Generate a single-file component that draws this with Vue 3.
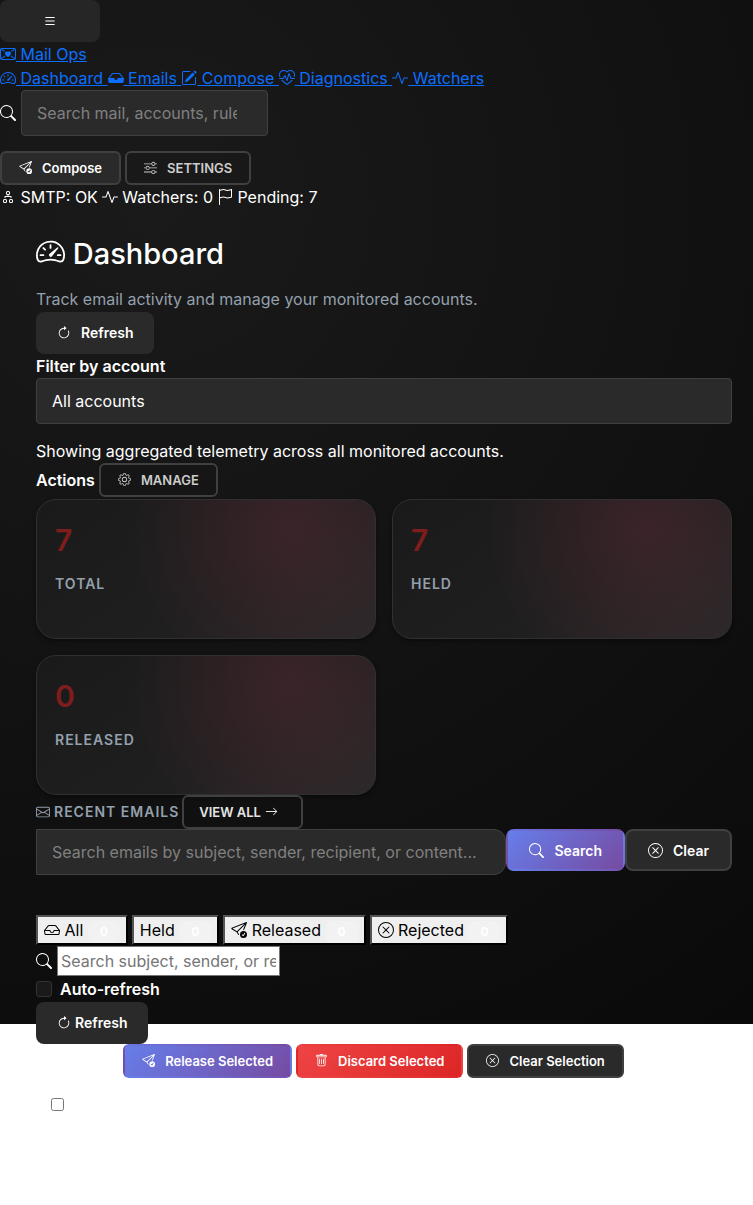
<script setup>
import { h, ref } from 'vue'

const icons = {
  list: ['M2.5 12a.5.5 0 0 1 .5-.5h10a.5.5 0 0 1 0 1H3a.5.5 0 0 1-.5-.5m0-4a.5.5 0 0 1 .5-.5h10a.5.5 0 0 1 0 1H3a.5.5 0 0 1-.5-.5m0-4a.5.5 0 0 1 .5-.5h10a.5.5 0 0 1 0 1H3a.5.5 0 0 1-.5-.5'],
  mailHeart: [
    'M2 2a2 2 0 0 0-2 2v8a2 2 0 0 0 2 2h12a2 2 0 0 0 2-2V4a2 2 0 0 0-2-2zM1 4a1 1 0 0 1 1-1h12a1 1 0 0 1 1 1v8a1 1 0 0 1-1 1H2a1 1 0 0 1-1-1z',
    'M8 5.993c1.664-1.711 5.825 1.283 0 5.132-5.825-3.85-1.664-6.843 0-5.132',
    'M.8 3.6 1.4 2.8 5 5 4.4 5.8zM15.2 3.6 14.6 2.8 11 5l.6.8zM.8 12.2l.6.8 4-2.7-.6-.8zM15.2 12.2l-.6.8-4-2.7.6-.8z'
  ],
  speedometer: [
    'M8 4a.5.5 0 0 1 .5.5V6a.5.5 0 0 1-1 0V4.5A.5.5 0 0 1 8 4M3.732 5.732a.5.5 0 0 1 .707 0l.915.914a.5.5 0 1 1-.708.708l-.914-.915a.5.5 0 0 1 0-.707M2 10a.5.5 0 0 1 .5-.5h1.586a.5.5 0 0 1 0 1H2.5A.5.5 0 0 1 2 10m9.5 0a.5.5 0 0 1 .5-.5h1.5a.5.5 0 0 1 0 1H12a.5.5 0 0 1-.5-.5m.754-4.246a.39.39 0 0 0-.527-.02L7.547 9.31a.91.91 0 1 0 1.302 1.258l3.434-4.297a.39.39 0 0 0-.029-.518z',
    'M0 10a8 8 0 1 1 15.547 2.661c-.442 1.253-1.845 1.602-2.932 1.25C11.309 13.488 9.475 13 8 13c-1.474 0-3.31.488-4.615.911-1.087.352-2.49.003-2.932-1.25A8 8 0 0 1 0 10m8-7a7 7 0 0 0-6.603 9.329c.203.575.923.876 1.68.63C4.397 12.533 6.358 12 8 12s3.604.532 4.923.96c.757.245 1.477-.056 1.68-.631A7 7 0 0 0 8 3'
  ],
  inboxFill: ['M4.98 4a.5.5 0 0 0-.39.188L1.54 8H6a.5.5 0 0 1 .5.5 1.5 1.5 0 1 0 3 0A.5.5 0 0 1 10 8h4.46l-3.05-3.812A.5.5 0 0 0 11.02 4zm-1.17-.437A1.5 1.5 0 0 1 4.98 3h6.04a1.5 1.5 0 0 1 1.17.563l3.7 4.625a.5.5 0 0 1 .106.374l-.39 3.124A1.5 1.5 0 0 1 14.117 13H1.883a1.5 1.5 0 0 1-1.489-1.314l-.39-3.124a.5.5 0 0 1 .106-.374z'],
  inbox: ['M4.98 4a.5.5 0 0 0-.39.188L1.54 8H6a.5.5 0 0 1 .5.5 1.5 1.5 0 1 0 3 0A.5.5 0 0 1 10 8h4.46l-3.05-3.812A.5.5 0 0 0 11.02 4zm9.954 5H10.45a2.5 2.5 0 0 1-4.9 0H1.066l.32 2.562a.5.5 0 0 0 .497.438h12.234a.5.5 0 0 0 .496-.438zM3.809 3.563A1.5 1.5 0 0 1 4.981 3h6.038a1.5 1.5 0 0 1 1.172.563l3.7 4.625a.5.5 0 0 1 .105.374l-.39 3.124A1.5 1.5 0 0 1 14.117 13H1.883a1.5 1.5 0 0 1-1.489-1.314l-.39-3.124a.5.5 0 0 1 .106-.374z'],
  pencil: [
    'M15.502 1.94a.5.5 0 0 1 0 .706L14.459 3.69l-2-2L13.502.646a.5.5 0 0 1 .707 0l1.293 1.293zm-1.75 2.456-2-2L4.939 9.21a.5.5 0 0 0-.121.196l-.805 2.414a.25.25 0 0 0 .316.316l2.414-.805a.5.5 0 0 0 .196-.12l6.813-6.814z',
    'M1 13.5A1.5 1.5 0 0 0 2.5 15h11a1.5 1.5 0 0 0 1.5-1.5v-6a.5.5 0 0 0-1 0v6a.5.5 0 0 1-.5.5h-11a.5.5 0 0 1-.5-.5v-11a.5.5 0 0 1 .5-.5H9a.5.5 0 0 0 0-1H2.5A1.5 1.5 0 0 0 1 2.5z'
  ],
  heartPulse: [
    'm8 2.748-.717-.737C5.6.281 2.514.878 1.4 3.053.918 3.995.78 5.323 1.508 7H.43c-2.128-5.697 4.165-8.83 7.394-5.857q.09.083.176.171a3 3 0 0 1 .176-.17c3.23-2.974 9.522.159 7.394 5.856h-1.078c.728-1.677.59-3.005.108-3.947C13.486.878 10.4.28 8.717 2.01zM2.212 10h1.315C4.593 11.183 6.05 12.458 8 13.795c1.949-1.337 3.407-2.612 4.473-3.795h1.315c-1.265 1.566-3.14 3.25-5.788 5-2.648-1.75-4.523-3.434-5.788-5',
    'M10.464 3.314a.5.5 0 0 0-.945.049L7.921 8.956 6.464 5.314a.5.5 0 0 0-.88-.091L3.732 8H.5a.5.5 0 0 0 0 1H4a.5.5 0 0 0 .416-.223l1.473-2.209 1.647 4.118a.5.5 0 0 0 .945-.049l1.598-5.593 1.457 3.642A.5.5 0 0 0 12 9h3.5a.5.5 0 0 0 0-1h-3.162z'
  ],
  activity: ['M6 2a.5.5 0 0 1 .47.33L10 12.036l1.53-4.208A.5.5 0 0 1 12 7.5h3.5a.5.5 0 0 1 0 1h-3.15l-1.88 5.17a.5.5 0 0 1-.94 0L6 3.964 4.47 8.171A.5.5 0 0 1 4 8.5H.5a.5.5 0 0 1 0-1h3.15l1.88-5.17A.5.5 0 0 1 6 2'],
  search: ['M11.742 10.344a6.5 6.5 0 1 0-1.397 1.398h-.001q.044.06.098.115l3.85 3.85a1 1 0 0 0 1.415-1.414l-3.85-3.85a1 1 0 0 0-.115-.1zM12 6.5a5.5 5.5 0 1 1-11 0 5.5 5.5 0 0 1 11 0'],
  sendCheck: [
    'M15.964.686a.5.5 0 0 0-.65-.65L.767 5.855a.75.75 0 0 0-.124 1.329l4.995 3.178 1.531 2.406a.5.5 0 0 0 .844-.536L6.637 10.07l7.494-7.494-1.895 4.738a.5.5 0 1 0 .928.372zm-2.54 1.183L5.93 9.363 1.591 6.602z',
    'M16 12.5a3.5 3.5 0 1 1-7 0 3.5 3.5 0 0 1 7 0m-1.993-1.679a.5.5 0 0 0-.686.172l-1.17 1.95-.547-.547a.5.5 0 0 0-.708.708l.774.773a.75.75 0 0 0 1.174-.144l1.335-2.226a.5.5 0 0 0-.172-.686'
  ],
  sliders: ['M11.5 2a1.5 1.5 0 1 0 0 3 1.5 1.5 0 0 0 0-3M9.05 3a2.5 2.5 0 0 1 4.9 0H16v1h-2.05a2.5 2.5 0 0 1-4.9 0H0V3zM4.5 7a1.5 1.5 0 1 0 0 3 1.5 1.5 0 0 0 0-3M2.05 8a2.5 2.5 0 0 1 4.9 0H16v1H6.95a2.5 2.5 0 0 1-4.9 0H0V8zm9.45 4a1.5 1.5 0 1 0 0 3 1.5 1.5 0 0 0 0-3m-2.45 1a2.5 2.5 0 0 1 4.9 0H16v1h-2.05a2.5 2.5 0 0 1-4.9 0H0v-1z'],
  diagram: ['M6 3.5A1.5 1.5 0 0 1 7.5 2h1A1.5 1.5 0 0 1 10 3.5v1A1.5 1.5 0 0 1 8.5 6v1H11a.5.5 0 0 1 .5.5v1a.5.5 0 0 1-1 0V8h-5v.5a.5.5 0 0 1-1 0v-1A.5.5 0 0 1 5 7h2.5V6A1.5 1.5 0 0 1 6 4.5zM8.5 5a.5.5 0 0 0 .5-.5v-1a.5.5 0 0 0-.5-.5h-1a.5.5 0 0 0-.5.5v1a.5.5 0 0 0 .5.5zM3 11.5A1.5 1.5 0 0 1 4.5 10h1A1.5 1.5 0 0 1 7 11.5v1A1.5 1.5 0 0 1 5.5 14h-1A1.5 1.5 0 0 1 3 12.5zm1.5-.5a.5.5 0 0 0-.5.5v1a.5.5 0 0 0 .5.5h1a.5.5 0 0 0 .5-.5v-1a.5.5 0 0 0-.5-.5zm4.5.5a1.5 1.5 0 0 1 1.5-1.5h1a1.5 1.5 0 0 1 1.5 1.5v1a1.5 1.5 0 0 1-1.5 1.5h-1A1.5 1.5 0 0 1 9 12.5zm1.5-.5a.5.5 0 0 0-.5.5v1a.5.5 0 0 0 .5.5h1a.5.5 0 0 0 .5-.5v-1a.5.5 0 0 0-.5-.5z'],
  flag: ['M14.778.085A.5.5 0 0 1 15 .5V8a.5.5 0 0 1-.314.464l-.032.013a12 12 0 0 1-.397.15c-.264.095-.631.223-1.047.35-.816.252-1.879.523-2.71.523-.847 0-1.548-.28-2.158-.525l-.028-.01C7.68 8.71 7.14 8.5 6.5 8.5c-.7 0-1.638.23-2.437.477A20 20 0 0 0 3 9.342V15.5a.5.5 0 0 1-1 0V.5a.5.5 0 0 1 1 0v.282c.226-.079.496-.17.79-.26C4.606.272 5.67 0 6.5 0c.84 0 1.524.277 2.121.519l.043.018C9.286.788 9.828 1 10.5 1c.7 0 1.638-.23 2.437-.477a20 20 0 0 0 1.349-.476zM14 1.221c-.22.078-.48.167-.766.255-.81.252-1.872.523-2.734.523-.886 0-1.592-.286-2.203-.534l-.008-.003C7.662 1.21 7.139 1 6.5 1c-.669 0-1.606.229-2.415.478A21 21 0 0 0 3 1.845v6.433c.22-.078.48-.167.766-.255C4.576 7.77 5.638 7.5 6.5 7.5c.847 0 1.548.28 2.158.525l.028.01C9.32 8.29 9.86 8.5 10.5 8.5c.668 0 1.606-.229 2.415-.478A21 21 0 0 0 14 7.655z'],
  refresh: [
    'M8 3a5 5 0 1 0 4.546 2.914.5.5 0 0 1 .908-.417A6 6 0 1 1 8 2z',
    'M8 4.466V.534a.25.25 0 0 1 .41-.192l2.36 1.966c.12.1.12.284 0 .384L8.41 4.658A.25.25 0 0 1 8 4.466'
  ],
  gear: [
    'M8 4.754a3.246 3.246 0 1 0 0 6.492 3.246 3.246 0 0 0 0-6.492M5.754 8a2.246 2.246 0 1 1 4.492 0 2.246 2.246 0 0 1-4.492 0',
    'M9.796 1.343c-.527-1.79-3.065-1.79-3.592 0l-.094.319a.873.873 0 0 1-1.255.52l-.292-.16c-1.64-.892-3.433.902-2.54 2.541l.159.292a.873.873 0 0 1-.52 1.255l-.319.094c-1.79.527-1.79 3.065 0 3.592l.319.094a.873.873 0 0 1 .52 1.255l-.16.292c-.892 1.64.901 3.434 2.541 2.54l.292-.159a.873.873 0 0 1 1.255.52l.094.319c.527 1.79 3.065 1.79 3.592 0l.094-.319a.873.873 0 0 1 1.255-.52l.292.16c1.64.893 3.434-.902 2.54-2.541l-.159-.292a.873.873 0 0 1 .52-1.255l.319-.094c1.79-.527 1.79-3.065 0-3.592l-.319-.094a.873.873 0 0 1-.52-1.255l.16-.292c.893-1.64-.902-3.433-2.541-2.54l-.292.159a.873.873 0 0 1-1.255-.52zm-2.633.283c.246-.835 1.428-.835 1.674 0l.094.319a1.873 1.873 0 0 0 2.693 1.115l.291-.16c.764-.415 1.6.42 1.184 1.185l-.159.292a1.873 1.873 0 0 0 1.116 2.692l.318.094c.835.246.835 1.428 0 1.674l-.319.094a1.873 1.873 0 0 0-1.115 2.693l.16.291c.415.764-.42 1.6-1.185 1.184l-.291-.159a1.873 1.873 0 0 0-2.693 1.116l-.094.318c-.246.835-1.428.835-1.674 0l-.094-.319a1.873 1.873 0 0 0-2.692-1.115l-.292.16c-.764.415-1.6-.42-1.184-1.185l.159-.291A1.873 1.873 0 0 0 1.945 8.93l-.319-.094c-.835-.246-.835-1.428 0-1.674l.319-.094A1.873 1.873 0 0 0 3.06 4.377l-.16-.292c-.415-.764.42-1.6 1.185-1.184l.292.159a1.873 1.873 0 0 0 2.692-1.115z'
  ],
  envelope: ['M0 4a2 2 0 0 1 2-2h12a2 2 0 0 1 2 2v8a2 2 0 0 1-2 2H2a2 2 0 0 1-2-2zm2-1a1 1 0 0 0-1 1v.217l7 4.2 7-4.2V4a1 1 0 0 0-1-1zm13 2.383-4.708 2.825L15 11.105zm-.034 6.876-5.64-3.471L8 9.583l-1.326-.795-5.64 3.47A1 1 0 0 0 2 13h12a1 1 0 0 0 .966-.741M1 11.105l4.708-2.897L1 5.383z'],
  arrow: ['M1 8a.5.5 0 0 1 .5-.5h11.793l-3.147-3.146a.5.5 0 0 1 .708-.708l4 4a.5.5 0 0 1 0 .708l-4 4a.5.5 0 0 1-.708-.708L13.293 8.5H1.5A.5.5 0 0 1 1 8'],
  xCircle: [
    'M8 15A7 7 0 1 1 8 1a7 7 0 0 1 0 14m0 1A8 8 0 1 0 8 0a8 8 0 0 0 0 16',
    'M4.646 4.646a.5.5 0 0 1 .708 0L8 7.293l2.646-2.647a.5.5 0 0 1 .708.708L8.707 8l2.647 2.646a.5.5 0 0 1-.708.708L8 8.707l-2.646 2.647a.5.5 0 0 1-.708-.708L7.293 8 4.646 5.354a.5.5 0 0 1 0-.708'
  ],
  trash: [
    'M5.5 5.5A.5.5 0 0 1 6 6v6a.5.5 0 0 1-1 0V6a.5.5 0 0 1 .5-.5m2.5 0a.5.5 0 0 1 .5.5v6a.5.5 0 0 1-1 0V6a.5.5 0 0 1 .5-.5m3 .5a.5.5 0 0 0-1 0v6a.5.5 0 0 0 1 0z',
    'M14.5 3a1 1 0 0 1-1 1H13v9a2 2 0 0 1-2 2H5a2 2 0 0 1-2-2V4h-.5a1 1 0 0 1-1-1V2a1 1 0 0 1 1-1H6a1 1 0 0 1 1-1h2a1 1 0 0 1 1 1h3.5a1 1 0 0 1 1 1zM4.118 4 4 4.059V13a1 1 0 0 0 1 1h6a1 1 0 0 0 1-1V4.059L11.882 4zM2.5 3h11V2h-11z'
  ]
}

const Icon = ({ name }) =>
  h('svg', { class: 'icon', viewBox: '0 0 16 16', 'aria-hidden': 'true' },
    icons[name].map(d => h('path', { d, 'fill-rule': 'evenodd' })))
Icon.props = ['name']

const links = [
  { icon: 'speedometer', text: 'Dashboard' },
  { icon: 'inboxFill', text: 'Emails' },
  { icon: 'pencil', text: 'Compose' },
  { icon: 'heartPulse', text: 'Diagnostics' },
  { icon: 'activity', text: 'Watchers' }
]
const stats = [
  { value: 7, label: 'Total' },
  { value: 7, label: 'Held' },
  { value: 0, label: 'Released' }
]
const tabs = [
  { icon: 'inbox', text: 'All', count: 0 },
  { icon: null, text: 'Held', count: 0 },
  { icon: 'sendCheck', text: 'Released', count: 0 },
  { icon: 'xCircle', text: 'Rejected', count: 0 }
]
const account = ref('all')
const autoRefresh = ref(false)
const selectAll = ref(false)
</script>

<template>
  <div class="page">
    <header>
      <button class="btn toggle" type="button" aria-label="Toggle navigation"><Icon name="list" /></button>
      <div><a href="#"><Icon name="mailHeart" /> Mail Ops</a></div>
      <nav class="nav">
        <a v-for="(link, i) in links" :key="link.text" href="#"><Icon :name="link.icon" />&nbsp;{{ link.text }}<template v-if="i < links.length - 1">&nbsp;</template></a>
      </nav>
      <form class="top-search" @submit.prevent>
        <Icon name="search" />
        <input class="field" type="text" aria-label="Search mail" placeholder="Search mail, accounts, rules">
      </form>
      <div class="row">
        <button class="btn small solid" type="button"><Icon name="sendCheck" />Compose</button>
        <button class="btn small outline" type="button"><Icon name="sliders" />SETTINGS</button>
      </div>
      <div class="status">
        <span><Icon name="diagram" /> SMTP: OK</span>
        <span><Icon name="activity" /> Watchers: 0</span>
        <span><Icon name="flag" /> Pending: 7</span>
      </div>
    </header>

    <main>
      <h1><Icon name="speedometer" /> Dashboard</h1>
      <p class="muted">Track email activity and manage your monitored accounts.</p>
      <button class="btn" type="button"><Icon name="refresh" />Refresh</button>
      <label class="strong" for="account">Filter by account</label>
      <select id="account" v-model="account" class="field account">
        <option value="all">All accounts</option>
      </select>
      <p>Showing aggregated telemetry across all monitored accounts.</p>
      <div class="row actions">
        <span class="strong">Actions</span>
        <button class="btn small outline" type="button"><Icon name="gear" />MANAGE</button>
      </div>

      <section class="stats">
        <article v-for="stat in stats" :key="stat.label" class="stat">
          <div class="value">{{ stat.value }}</div>
          <div class="label">{{ stat.label }}</div>
        </article>
      </section>

      <div class="row recent">
        <h2><Icon name="envelope" />Recent Emails</h2>
        <button class="btn small outline bright" type="button">VIEW ALL <Icon name="arrow" /></button>
      </div>
      <form class="mail-search" @submit.prevent>
        <input class="field" type="text" aria-label="Search emails" placeholder="Search emails by subject, sender, recipient, or content...">
        <button class="btn edged primary" type="submit"><Icon name="search" />Search</button>
        <button class="btn edged solid" type="button"><Icon name="xCircle" />Clear</button>
      </form>

      <div class="row tabs">
        <button v-for="tab in tabs" :key="tab.text" class="tab" type="button">
          <Icon v-if="tab.icon" :name="tab.icon" /> {{ tab.text }} <span class="badge">{{ tab.count }}</span>
        </button>
      </div>
      <div class="row filter">
        <Icon name="search" />
        <input class="plain" type="text" aria-label="Filter emails" placeholder="Search subject, sender, or recipient">
      </div>
      <label class="strong auto"><input v-model="autoRefresh" class="dark-check" type="checkbox">Auto-refresh</label>
      <button class="btn tight" type="button"><Icon name="refresh" />Refresh</button>
      <div class="row bulk">
        <button class="btn small primary" type="button"><Icon name="sendCheck" />Release Selected</button>
        <button class="btn small danger" type="button"><Icon name="trash" />Discard Selected</button>
        <button class="btn small solid" type="button"><Icon name="xCircle" />Clear Selection</button>
      </div>
      <div class="select-all"><input v-model="selectAll" type="checkbox" aria-label="Select all emails"></div>
    </main>
  </div>
</template>

<style>
body {
  margin: 0;
  background: #fff;
}
</style>

<style scoped>
.page {
  min-height: 100vh;
  box-sizing: border-box;
  background: radial-gradient(circle at 20% 20%, #1a1a1a 0%, #0a0a0a 100%) no-repeat;
  background-size: 100% 85vh;
  color: #fff;
  font-family: Inter, "Liberation Sans", sans-serif;
  font-size: 16px;
  line-height: 24px;
}
.page *, .page *::before { box-sizing: border-box; }
.page button, .page input, .page select { font-family: inherit; }
.icon {
  width: 1em;
  height: 1em;
  vertical-align: -2px;
  fill: currentColor;
  flex: none;
}
p, h1, h2 { margin: 0; }
a { color: #0d6efd; text-decoration: underline; }
.nav { display: flex; flex-wrap: wrap; }
.row { display: flex; flex-wrap: wrap; align-items: center; gap: 4px; }
.strong { font-weight: 600; }

.btn {
  display: inline-flex;
  align-items: center;
  justify-content: center;
  gap: 10px;
  min-height: 42px;
  padding: 10px 21px;
  border: 0;
  border-radius: 8px;
  background: #2a2a2a;
  color: #fff;
  font-size: 14px;
  font-weight: 600;
  line-height: 22px;
  white-space: nowrap;
}
.btn .icon { margin-bottom: 1px; }
.toggle { min-width: 100px; background: #262626; }
.tight { gap: 4px; }
.small {
  min-height: 34px;
  padding: 5px 17px;
  border: 2px solid #404040;
  border-radius: 6px;
  font-size: 13px;
  line-height: 20px;
}
.edged {
  padding: 9px 21px 7px;
  border: 2px solid #404040;
}
.edged .icon { width: 15px; height: 15px; }
.solid { background: #2a2a2a; }
.outline { background: transparent; color: #ccc; }
.bright { gap: 4px; padding: 5px 23px 5px 15px; color: #e5e5e5; }
.primary { border-color: transparent; background-image: linear-gradient(135deg, #667eea, #764ba2); }
.danger { border-color: transparent; background-image: linear-gradient(135deg, #ef4444, #dc2626); }

.field {
  height: 46px;
  padding: 10px 15px;
  border: 1px solid #404040;
  border-radius: 4px;
  outline: 0;
  background: #2a2a2a;
  color: #fff;
  font-size: 16px;
}
.field::placeholder { color: #808080; }
.top-search {
  display: flex;
  align-items: center;
  gap: 5px;
  margin-bottom: 15px;
}
.top-search .field { width: 247px; padding-right: 30px; }
.status { display: flex; flex-wrap: wrap; gap: 4px; }

main { padding: 28px 21px 0 36px; }
h1 {
  margin-bottom: 17px;
  font-size: 29px;
  font-weight: 500;
  line-height: 33px;
}
.muted { margin-bottom: 1px; color: #94a0ad; }
main > .btn { display: flex; }
main > .strong { display: block; }
.account {
  display: block;
  width: 100%;
  margin-bottom: 15px;
  appearance: none;
}
.actions { margin-bottom: 2px; }

.stats {
  display: grid;
  grid-template-columns: repeat(2, 1fr);
  gap: 16px;
}
.stat {
  min-height: 140px;
  padding: 19px 18px;
  border: 1px solid #303030;
  border-radius: 20px;
  background:
    radial-gradient(circle at 75% 20%, rgba(230, 70, 105, 0.14), transparent 60%),
    linear-gradient(145deg, #1a1a1a, #1f1f1f 60%, #272727);
  box-shadow: 0 2px 4px rgba(0, 0, 0, 0.4);
}
.value {
  color: #7f1d1d;
  font-size: 30px;
  font-weight: 600;
  line-height: 42px;
}
.label {
  margin-top: 11px;
  color: #94a0ad;
  font-size: 14px;
  font-weight: 600;
  letter-spacing: 1px;
  text-transform: uppercase;
}
.recent { gap: 3px; }
h2 {
  display: flex;
  align-items: center;
  gap: 4px;
  color: #94a0ad;
  font-size: 14px;
  font-weight: 600;
  letter-spacing: 1px;
  line-height: 24px;
  text-transform: uppercase;
}

.mail-search {
  display: flex;
  align-items: flex-start;
  margin-bottom: 40px;
}
.mail-search .field {
  flex: 1;
  min-width: 0;
  border-radius: 0 12px 12px 0;
}
.tab {
  height: 30px;
  padding: 1px 6px;
  border: 2px outset #000;
  background: #efefef;
  color: #000;
  font-size: 16px;
  line-height: 24px;
}
.badge {
  display: inline-block;
  min-width: 32px;
  border-radius: 6px;
  background: rgba(255, 255, 255, 0.2);
  color: #fff;
  font-size: 12px;
  font-weight: 700;
  line-height: 22px;
  text-align: center;
}
.filter { gap: 5px; margin-top: 1px; }
.plain {
  width: 223px;
  height: 30px;
  padding: 1px 3px;
  border: 1px solid #767676;
  background: #fff;
  font-size: 16px;
}
main > .auto {
  display: flex;
  align-items: center;
  gap: 8px;
  min-height: 26px;
}
.dark-check {
  width: 16px;
  height: 16px;
  margin: 0;
  border: 1px solid #333;
  border-radius: 3px;
  appearance: none;
  background: #1a1a1a;
}
.bulk { justify-content: center; padding-right: 21px; }
.select-all { padding: 20px 15px; line-height: 13px; }
.select-all input { width: 13px; height: 13px; margin: 0; }
</style>
